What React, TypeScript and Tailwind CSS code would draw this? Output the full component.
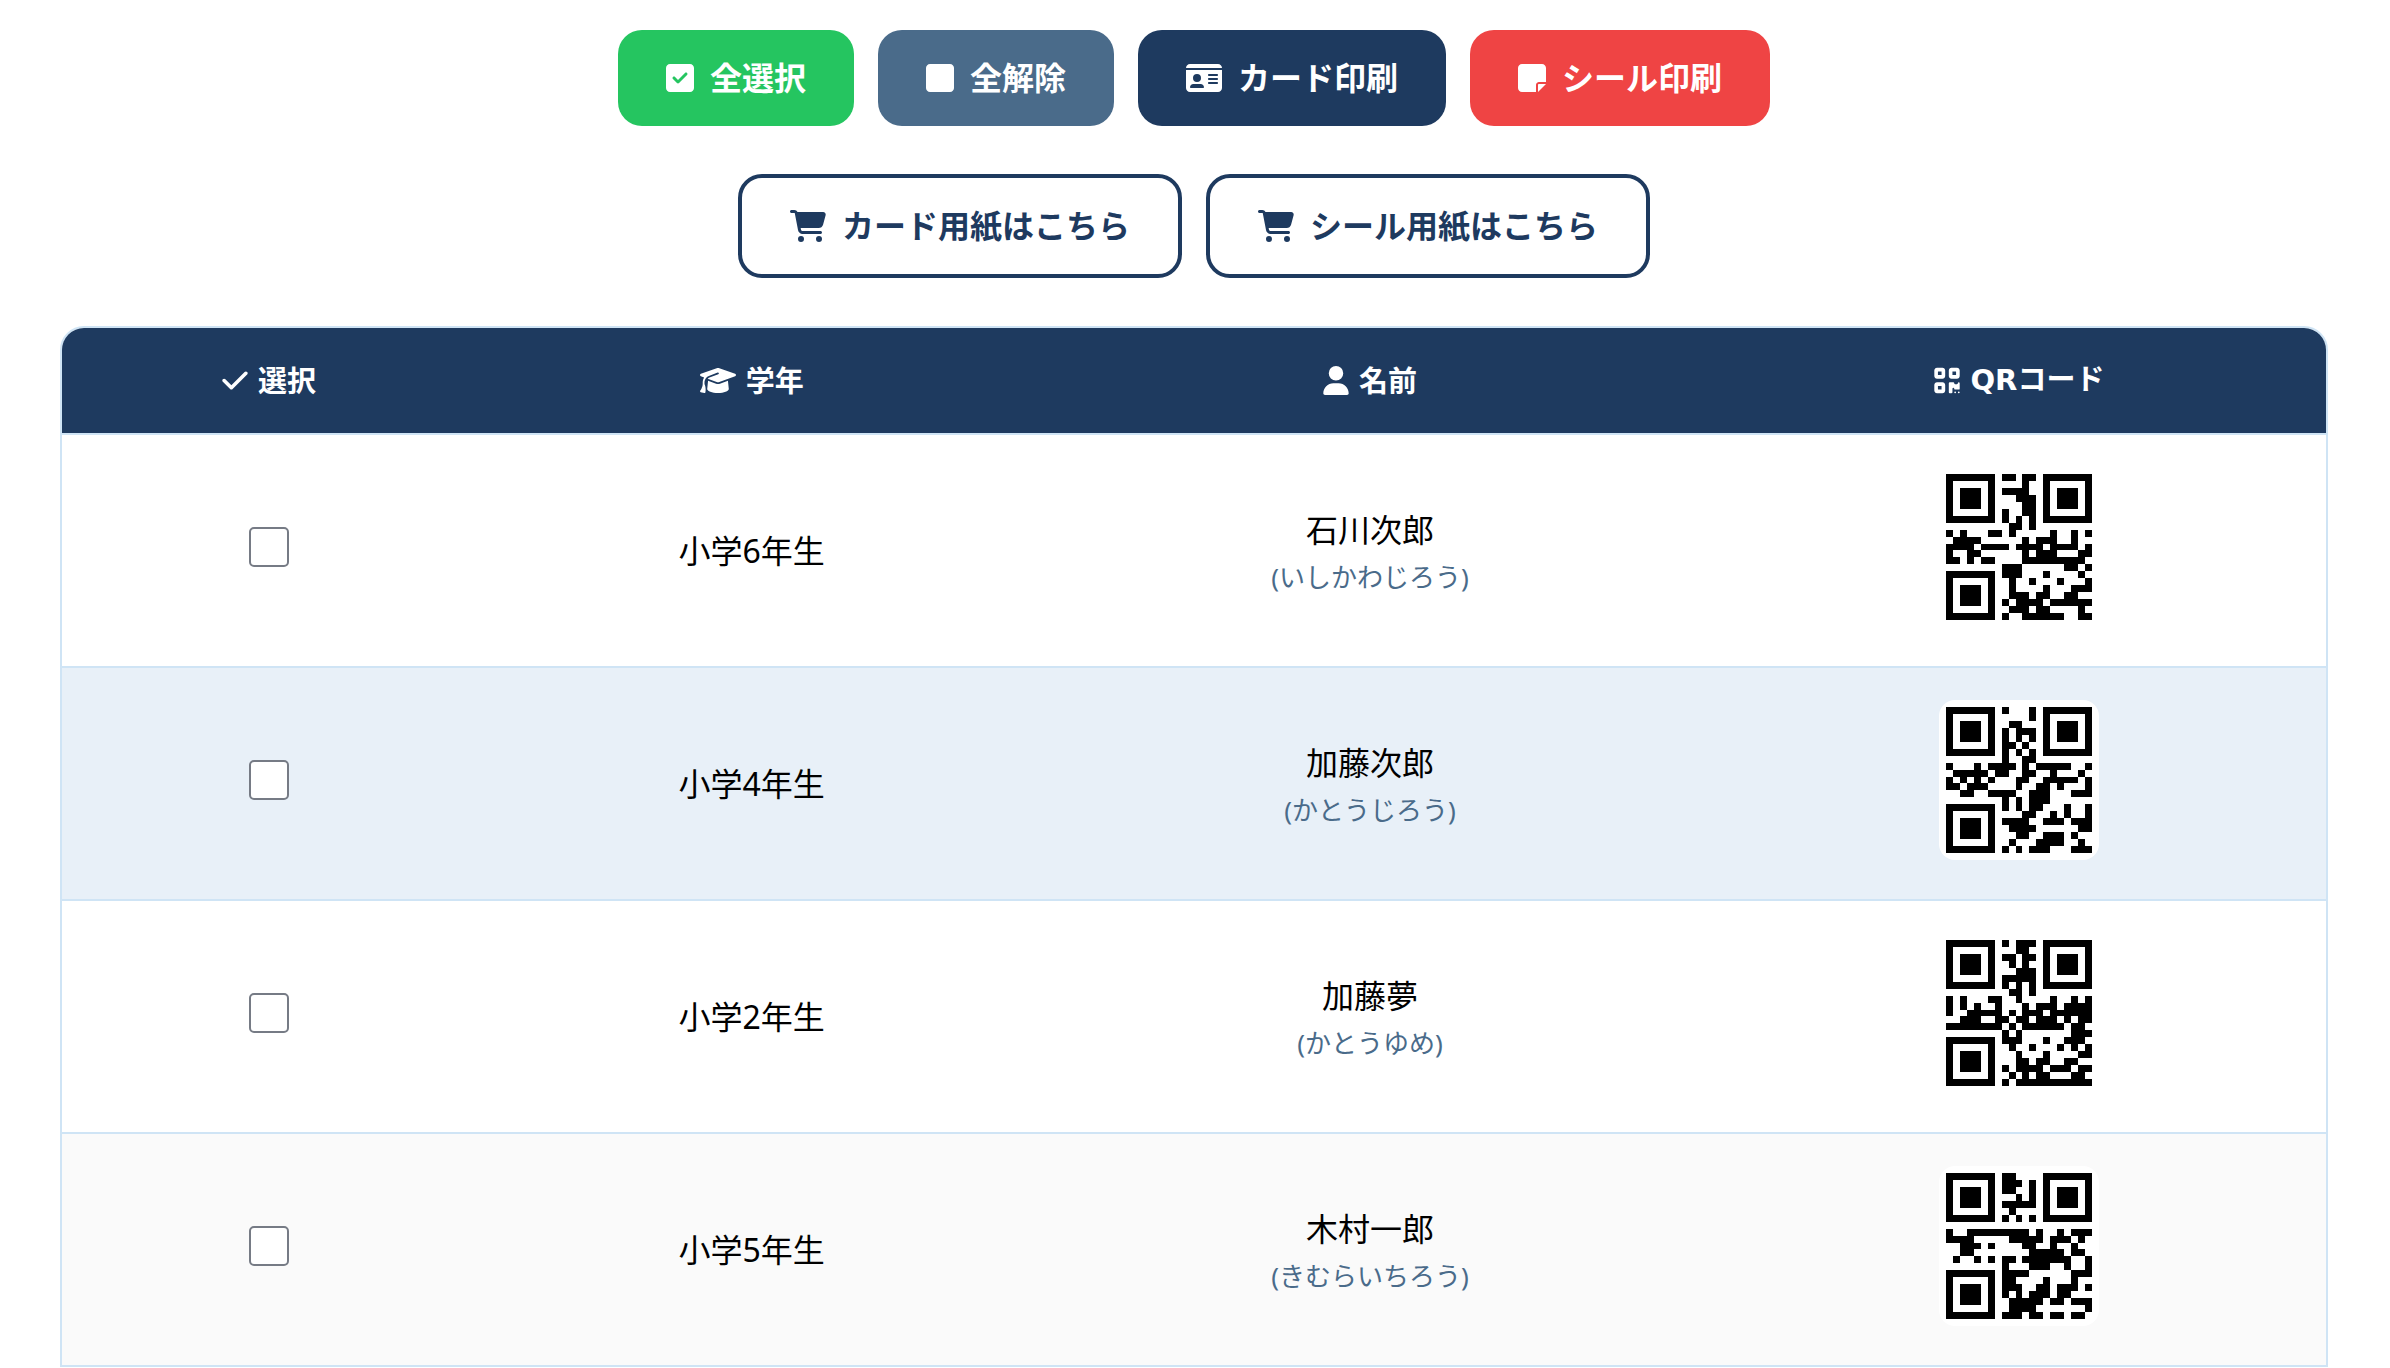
import { FaCartShopping, FaCheck, FaGraduationCap, FaIdCard, FaNoteSticky, FaQrcode, FaSquare, FaSquareCheck, FaUser } from "react-icons/fa6"

type Student = { id: string; mask: number; grade: string; name: string; kana: string; bg: string }

const students: Student[] = [
    { id: "6925157963", mask: 1, grade: "小学6年生", name: "石川次郎", kana: "いしかわじろう", bg: "bg-white" },
    { id: "8106580114", mask: 4, grade: "小学4年生", name: "加藤次郎", kana: "かとうじろう", bg: "bg-[#e8f0f8]" },
    { id: "9477901908", mask: 1, grade: "小学2年生", name: "加藤夢", kana: "かとうゆめ", bg: "bg-white" },
    { id: "3478590098", mask: 6, grade: "小学5年生", name: "木村一郎", kana: "きむらいちろう", bg: "bg-[#fafafa]" },
]

// QR version 1-M, numeric mode, 10 digit ids
const SIZE = 21
const formats: Record<number, string> = { 1: "101000100100101", 4: "100010111111001", 6: "100111110010111" }
const masks: Record<number, (r: number, c: number) => boolean> = {
    1: (r) => r % 2 === 0,
    4: (r, c) => (Math.floor(r / 2) + Math.floor(c / 3)) % 2 === 0,
    6: (r, c) => (((r * c) % 2) + ((r * c) % 3)) % 2 === 0,
}

function mul(a: number, b: number) {
    let out = 0
    for (let x = a, y = b; y; y >>= 1) {
        if (y & 1) out ^= x
        x <<= 1
        if (x & 256) x ^= 285
    }
    return out
}

function errorWords(data: number[]) {
    let gen = [1]
    for (let i = 0, root = 1; i < 10; i++, root = mul(root, 2)) {
        const next = [...gen, 0]
        gen.forEach((g, j) => { next[j + 1] ^= mul(g, root) })
        gen = next
    }
    const rest = [...data, ...Array(10).fill(0)]
    data.forEach((_, i) => {
        const lead = rest[i]
        gen.forEach((g, j) => { rest[i + j] ^= mul(g, lead) })
    })
    return rest.slice(data.length)
}

function encode(id: string, mask: number) {
    const bin = (n: number, len: number) => n.toString(2).padStart(len, "0")
    let bits = "0001" + bin(id.length, 10)
    for (let i = 0; i < 9; i += 3) bits += bin(Number(id.slice(i, i + 3)), 10)
    bits = (bits + bin(Number(id[9]), 4)).padEnd(56, "0")

    const data = (bits.match(/.{8}/g) ?? []).map((b) => parseInt(b, 2))
    for (let i = 0; data.length < 16; i++) data.push(i % 2 ? 0x11 : 0xec)
    const words = [...data, ...errorWords(data)]

    const grid: number[][] = Array.from({ length: SIZE }, () => Array(SIZE).fill(0))
    // finder squares
    for (const [y, x] of [[0, 0], [0, 14], [14, 0]]) {
        for (let i = 0; i < 7; i++) {
            for (let j = 0; j < 7; j++) {
                grid[y + i][x + j] = Math.max(Math.abs(i - 3), Math.abs(j - 3)) === 2 ? 0 : 1
            }
        }
    }
    // timing lines
    for (let i = 8; i < 13; i += 2) {
        grid[6][i] = 1
        grid[i][6] = 1
    }

    const f = [...formats[mask]].map(Number)
    ;[0, 1, 2, 3, 4, 5, 7].forEach((c, i) => {
        grid[8][c] = f[i]
        grid[20 - i][8] = f[i]
    })
    grid[13][8] = 1
    grid[8][8] = f[7]
    grid[7][8] = f[8]
    for (let i = 0; i < 6; i++) grid[5 - i][8] = f[9 + i]
    for (let i = 0; i < 8; i++) grid[8][13 + i] = f[7 + i]

    let n = 0
    let up = true
    for (let c = 20; c > 0; c -= 2) {
        if (c === 6) c = 5
        for (let k = 0; k < SIZE; k++) {
            const r = up ? 20 - k : k
            for (const x of [c, c - 1]) {
                if (r === 6 || (r < 9 && (x < 9 || x > 12)) || (r > 12 && x < 9)) continue
                const bit = (words[n >> 3] >> (7 - (n % 8))) & 1
                grid[r][x] = bit ^ (masks[mask](r, x) ? 1 : 0)
                n++
            }
        }
        up = !up
    }
    return grid
}

function QrCode({ id, mask, label }: { id: string; mask: number; label: string }) {
    const d = encode(id, mask)
        .map((row, y) => row.map((on, x) => (on ? `M${x} ${y}h1v1h-1z` : "")).join(""))
        .join("")
    return (
        <div className="mx-auto size-40 rounded-2xl bg-white p-[7px]">
            <svg role="img" aria-label={label} viewBox="0 0 21 21" className="size-full" shapeRendering="crispEdges">
                <path d={d} fill="#000" />
            </svg>
        </div>
    )
}

export default function App() {
    const btn = "flex items-center gap-4 rounded-3xl px-12 py-6 leading-[48px] font-bold text-white cursor-pointer"
    const shop = "flex items-center gap-4 rounded-3xl border-4 border-[#1e3a5f] bg-white px-12 py-6 leading-[48px] font-bold text-[#1e3a5f]"
    const th = "px-8 py-8 leading-[41px] text-[29px] font-bold"
    const head = "flex items-center justify-center gap-[10px]"

    return (
        <main className="bg-white pt-[30px] pr-[62px] pl-[60px] font-['Noto_Sans','Noto_Sans_CJK_JP',sans-serif] text-[32px] text-black" lang="ja">
            <div className="flex flex-wrap justify-center gap-6">
                <button type="button" className={`${btn} bg-[#25c560]`}><FaSquareCheck className="h-8 w-7" />全選択</button>
                <button type="button" className={`${btn} bg-[#4a6b8a]`}><FaSquare className="h-8 w-7" />全解除</button>
                <button type="button" className={`${btn} bg-[#1e3a5f]`}><FaIdCard className="h-8 w-9" />カード印刷</button>
                <button type="button" className={`${btn} bg-[#ef4444]`}><FaNoteSticky className="h-8 w-7" />シール印刷</button>
            </div>
            <div className="mt-12 flex flex-wrap justify-center gap-6">
                <a href="#card" className={shop}><FaCartShopping className="h-8 w-9" />カード用紙はこちら</a>
                <a href="#seal" className={shop}><FaCartShopping className="h-8 w-9" />シール用紙はこちら</a>
            </div>

            <div className="mt-12 overflow-hidden rounded-t-3xl border-2 border-[#cfe4f5]">
                <table className="w-full text-center">
                    <thead>
                        <tr className="border-b-2 border-[#cfe4f5] bg-[#1e3a5f] text-white">
                            <th className={th}><span className={head}><FaCheck className="h-[29px] w-[26px]" />選択</span></th>
                            <th className={th}><span className={head}><FaGraduationCap className="h-[29px] w-9" />学年</span></th>
                            <th className={th}><span className={head}><FaUser className="h-[29px] w-[26px]" />名前</span></th>
                            <th className={th}><span className={`${head} font-['DejaVu_Sans','Noto_Sans_CJK_JP',sans-serif]`}><FaQrcode className="h-[29px] w-[26px]" />QRコード</span></th>
                        </tr>
                    </thead>
                    <tbody>
                        {students.map((s) => (
                            <tr key={s.id} className={`border-b-2 border-[#cfe4f5] last:border-b-0 ${s.bg}`}>
                                <td className="px-8 pt-8 pb-[39px]">
                                    <input type="checkbox" aria-label={`${s.name}を選択`} className="mx-auto block size-10 appearance-none rounded-[5px] border-2 border-[#767b85] bg-white checked:bg-[#1e3a5f]" />
                                </td>
                                <td className="px-8 leading-[52px]">{s.grade}</td>
                                <td className="px-8 leading-[52px]">
                                    {s.name}
                                    <div className="text-[26px] leading-[42px] text-[#4a6b8a]">({s.kana})</div>
                                </td>
                                <td className="px-8 pt-8 pb-[39px]">
                                    <QrCode id={s.id} mask={s.mask} label={`${s.name}のQRコード`} />
                                </td>
                            </tr>
                        ))}
                    </tbody>
                </table>
            </div>
        </main>
    )
}
